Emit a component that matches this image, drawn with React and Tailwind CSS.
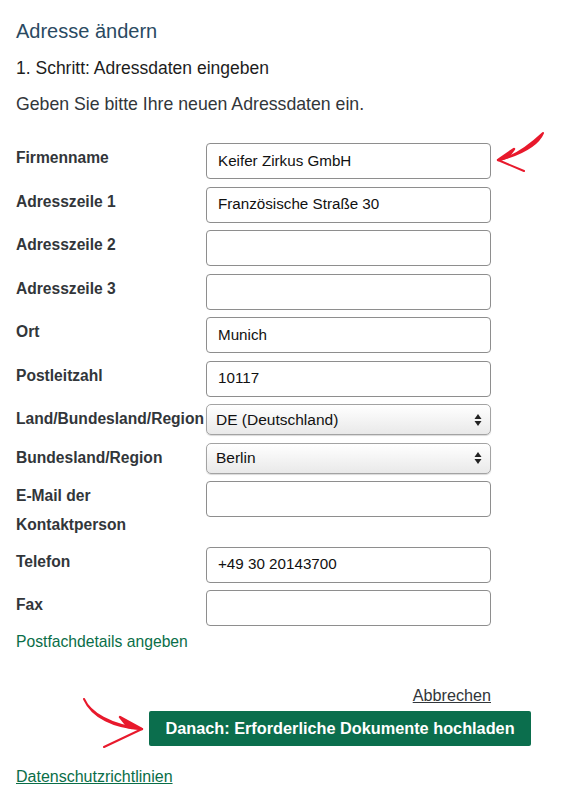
import React from 'react';

const fields = [
  { label: 'Firmenname', value: 'Keifer Zirkus GmbH' },
  { label: 'Adresszeile 1', value: 'Französische Straße 30' },
  { label: 'Adresszeile 2', value: '' },
  { label: 'Adresszeile 3', value: '' },
  { label: 'Ort', value: 'Munich' },
  { label: 'Postleitzahl', value: '10117' },
  { label: 'Land/Bundesland/Region', value: 'DE (Deutschland)', select: true },
  { label: 'Bundesland/Region', value: 'Berlin', select: true },
  { label: ['E-Mail der', 'Kontaktperson'], value: '' },
  { label: 'Telefon', value: '+49 30 20143700' },
  { label: 'Fax', value: '' },
];

function SelectArrows() {
  return (
    <svg width="8" height="14" viewBox="0 0 8 14" className="shrink-0">
      <path d="M4 1 L7.5 6 L0.5 6 Z" fill="#222" />
      <path d="M4 13 L7.5 8 L0.5 8 Z" fill="#222" />
    </svg>
  );
}

function Field({ field }) {
  const label = Array.isArray(field.label) ? field.label : [field.label];
  return (
    <div className="flex items-start">
      <div className="w-[190px] shrink-0 text-[15.6px] font-bold leading-[29px] text-[#32363a] whitespace-nowrap">
        {label.map((l) => (
          <div key={l}>{l}</div>
        ))}
      </div>
      {field.select ? (
        <div className="flex h-[31px] w-[285px] items-center justify-between rounded-[5px] border border-[#a3a3a3] bg-gradient-to-b from-white to-[#e9e9e9] pl-[9px] pr-[8px] text-[15.5px] text-[#111] shadow-[0_1px_1px_rgba(0,0,0,0.15)]">
          <span>{field.value}</span>
          <SelectArrows />
        </div>
      ) : (
        <div className="flex h-[36px] w-[285px] items-center rounded-[4px] border border-[#8e8e8e] bg-white px-[11px] text-[15.2px] text-[#111]">
          {field.value}
        </div>
      )}
    </div>
  );
}

export default function App() {
  return (
    <div className="relative min-h-[803px] w-[561px] bg-white px-4 font-['Liberation_Sans',Arial,sans-serif] text-[#32363a]">
      <h1 className="pt-[18px] text-[20px] leading-[26px] text-[#2a4a62]">Adresse ändern</h1>
      <h2 className="mt-[12px] text-[17.5px] leading-[24px] text-[#1d1d1d]">1. Schritt: Adressdaten eingeben</h2>
      <p className="mt-[12px] text-[17.7px] leading-[24px] text-[#32363a]">Geben Sie bitte Ihre neuen Adressdaten ein.</p>

      <div className="mt-[27px] flex flex-col gap-[7.5px]">
        {fields.map((f) => (
          <Field key={Array.isArray(f.label) ? f.label[0] : f.label} field={f} />
        ))}
      </div>

      <a className="mt-[6px] block text-[15.7px] leading-[20px] text-[#0a6e48]">Postfachdetails angeben</a>

      <div className="mt-[33px] flex w-[475px] justify-end">
        <a className="text-[16.2px] leading-[20px] text-[#32363a] underline">Abbrechen</a>
      </div>

      <div className="mt-[6px] flex w-[515px] justify-end">
        <button className="h-[35px] w-[382px] rounded-[2px] bg-[#0b6e4d] text-[16.3px] font-bold text-white">
          Danach: Erforderliche Dokumente hochladen
        </button>
      </div>

      <a className="mt-[21px] block text-[16px] leading-[20px] text-[#0a6e48] underline">Datenschutzrichtlinien</a>

      <svg className="absolute left-[494px] top-[129px]" width="54" height="46" viewBox="0 0 54 46">
        <path d="M49 4 C44 16 30 24 6 31 C18 28 34 18 49 4 Z" fill="#e8192c" stroke="#e8192c" strokeWidth="2" strokeLinejoin="round" />
        <path d="M4 31 L20 20 L14 28 Z" fill="#e8192c" stroke="#e8192c" strokeWidth="2.5" strokeLinejoin="round" />
        <path d="M4 31 L30 42" stroke="#e8192c" strokeWidth="2" strokeLinecap="round" />
      </svg>

      <svg className="absolute left-[80px] top-[695px]" width="66" height="56" viewBox="0 0 66 56">
        <path d="M4 4 C10 18 30 30 62 34 C34 33 12 22 4 4 Z" fill="#e8192c" stroke="#e8192c" strokeWidth="2" strokeLinejoin="round" />
        <path d="M62 34 L40 22 L48 32 Z" fill="#e8192c" stroke="#e8192c" strokeWidth="2.5" strokeLinejoin="round" />
        <path d="M62 34 L24 52" stroke="#e8192c" strokeWidth="2" strokeLinecap="round" />
      </svg>
    </div>
  );
}
